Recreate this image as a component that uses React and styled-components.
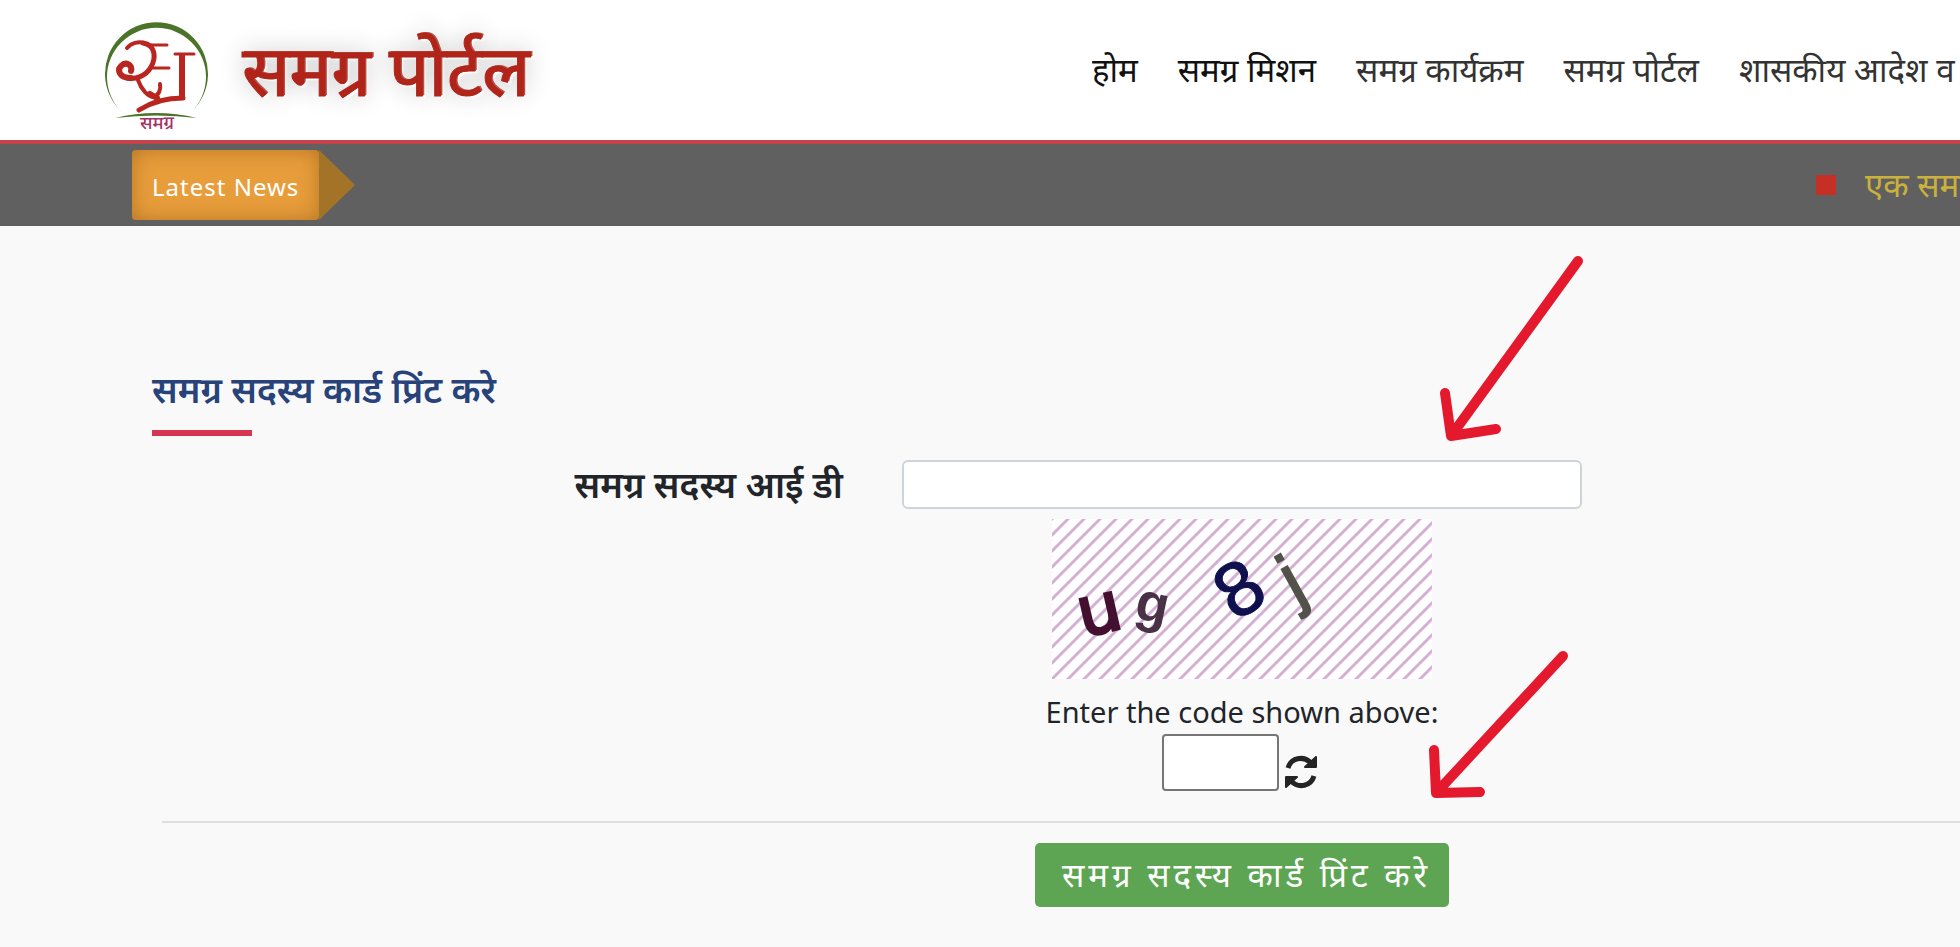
import React, { useState } from 'react';
import styled, { createGlobalStyle } from 'styled-components';

const GlobalStyle = createGlobalStyle`
  * {
    box-sizing: border-box;
  }

  body {
    margin: 0;
    background: #f9f9f9;
    color: #212529;
    font-family: 'Noto Sans', sans-serif;
    overflow-x: hidden;
  }
`;

const Header = styled.header`
  display: grid;
  grid-template-columns: minmax(0, 992px) minmax(0, 1fr);
  align-items: center;
  height: 144px;
  padding-left: 100px;
  background: #ffffff;
  border-bottom: 4px solid #c4434a;
`;

const Brand = styled.a`
  display: flex;
  align-items: flex-end;
  gap: 30px;
  height: 128px;
  color: #b0241a;
  text-decoration: none;
`;

const BrandName = styled.span`
  font-size: 70px;
  font-weight: 400;
  line-height: 130px;
  white-space: nowrap;
  -webkit-text-stroke: 1px #b0241a;
  text-shadow: 1px 0 0 #b5443b, 2px -1px 0 #b8544c, 3px 2px 2px #ffffff, 0 0 24px rgba(0, 0, 0, 0.3);
`;

const Nav = styled.nav`
  display: flex;
  gap: 40px;
  overflow: hidden;
`;

const NavLink = styled.a`
  flex: none;
  color: ${(props) => (props.$dark ? '#111111' : '#333333')};
  font-size: 33px;
  line-height: 60px;
  text-decoration: none;
  white-space: nowrap;
`;

const NewsBar = styled.section`
  display: flex;
  align-items: center;
  justify-content: space-between;
  height: 82px;
  padding-left: 132px;
  background: #606060;
  overflow: hidden;
`;

const NewsLabel = styled.div`
  display: flex;
  align-items: center;

  &::after {
    content: '';
    border: 35px solid transparent;
    border-left: 36px solid #a37428;
    border-right: 0;
  }
`;

const NewsText = styled.span`
  height: 70px;
  padding: 0 20px;
  border-radius: 4px;
  background: #e89d3b;
  box-shadow: inset 0 0 20px rgba(120, 70, 10, 0.45);
  color: #ffffff;
  font-size: 24px;
  letter-spacing: 1px;
  line-height: 74px;
`;

const Ticker = styled.div`
  display: flex;
  align-items: center;
  gap: 29px;
  flex: 0 0 144px;
  overflow: hidden;
  color: #cbb13c;
  font-size: 33px;
  line-height: 60px;
  white-space: nowrap;
`;

const Bullet = styled.span`
  flex: none;
  width: 20px;
  height: 20px;
  background: #c52f24;
`;

const Main = styled.main`
  padding: 134px 0 40px 152px;
`;

const Title = styled.h1`
  margin: 0 0 24px;
  color: #28427a;
  font-size: 36px;
  font-weight: 600;
  line-height: 60px;

  &::after {
    content: '';
    display: block;
    width: 100px;
    height: 6px;
    margin-top: 10px;
    background: #d63651;
  }
`;

const Form = styled.form`
  position: relative;
`;

const Row = styled.div`
  display: grid;
  grid-template-columns: minmax(0, 691px) minmax(0, 680px);
  column-gap: 59px;
  align-items: center;
`;

const FieldLabel = styled.label`
  font-size: 36px;
  font-weight: 600;
  line-height: 48px;
  text-align: right;
`;

const TextField = styled.input`
  width: 100%;
  height: 49px;
  padding: 4px 12px;
  border: 2px solid #ced4da;
  border-radius: 6px;
  background: #ffffff;
  font: inherit;
  font-size: 28px;
`;

const Centered = styled.div`
  grid-column: 2;
  display: flex;
  flex-direction: column;
  align-items: center;
`;

const CaptchaImage = styled.svg`
  display: block;
  margin-top: 10px;
`;

const CodeLabel = styled.label`
  margin-top: 10px;
  font-size: 29px;
  line-height: 45px;
  white-space: nowrap;
`;

const CodeLine = styled.div`
  display: flex;
  align-items: flex-end;
`;

const CodeField = styled.input`
  width: 117px;
  height: 57px;
  padding: 4px 8px;
  border: 2px solid #767676;
  border-radius: 4px;
  background: #ffffff;
  font: inherit;
  font-size: 28px;
`;

const RefreshButton = styled.button`
  display: flex;
  padding: 2px 6px;
  border: 0;
  background: transparent;
  cursor: pointer;
`;

const Divider = styled.hr`
  margin: 30px 0 20px 10px;
  border: 0;
  border-top: 2px solid #dedede;
`;

const SubmitButton = styled.button`
  height: 64px;
  padding: 0 18px 0 27px;
  border: 0;
  border-radius: 5px;
  background: #5da552;
  color: #ffffff;
  font: inherit;
  font-size: 33px;
  letter-spacing: 4px;
  line-height: 64px;
  white-space: nowrap;
  cursor: pointer;
`;

const Arrow = styled.svg`
  position: absolute;
  top: ${(props) => props.$top}px;
  left: ${(props) => props.$left}px;
  pointer-events: none;
  fill: none;
  stroke: #e5192d;
  stroke-width: 10;
  stroke-linecap: round;
  stroke-linejoin: round;
`;

const Logo = () => (
  <svg width="112" height="116" viewBox="0 0 112 116" aria-hidden="true">
    <path d="M22 94A51.5 51.5 0 1 1 91 94A49.5 49 0 1 0 22 94Z" fill="#4c7429" />
    <path d="M15 100Q56 90 97 100Q56 95 15 100Z" fill="#4c7429" />
    <g fill="none" stroke="#b8261f" strokeLinecap="round" strokeLinejoin="round">
      <path d="M27 30C31 25 39 23 44 25" strokeWidth="4" />
      <path d="M43 25C56 27 56 40 51 49C46 58 35 62 27 60" strokeWidth="5" />
      <path d="M31 60C19 60 17 52 21 48C26 43 33 47 31 53" strokeWidth="6" />
      <path d="M38 62C41 71 48 79 54 79C59 77 61 71 60 66" strokeWidth="4" />
      <path d="M50 76L57 80" strokeWidth="6" />
      <path d="M49 27H67M53 50H69" strokeWidth="3" />
      <path d="M75 36H94" strokeWidth="3" />
      <path d="M82 37V82" strokeWidth="6" strokeLinecap="butt" />
      <path d="M39 92C50 85 65 80 83 80" strokeWidth="5" />
    </g>
    <text x="57" y="111" fill="#a13262" fontFamily="'Noto Sans', sans-serif" fontSize="18" fontWeight="500" textAnchor="middle">
      समग्र
    </text>
  </svg>
);

const Captcha = () => (
  <CaptchaImage width="380" height="160" viewBox="0 0 380 160" role="img" aria-label="ug8j">
    <defs>
      <pattern id="hatch" width="16" height="16" patternUnits="userSpaceOnUse">
        <rect width="16" height="16" fill="#ffffff" />
        <path d="M-4 4L4 -4M-4 20L20 -4M12 20L20 12" stroke="#d4b0d4" strokeWidth="3" />
      </pattern>
    </defs>
    <rect width="380" height="160" fill="url(#hatch)" />
    <text transform="translate(31 118) rotate(-13)" fill="#431030" fontFamily="'DejaVu Sans', sans-serif" fontSize="68" stroke="#431030" strokeWidth="3">
      u
    </text>
    <text transform="translate(81 99) rotate(12)" fill="#493247" fontFamily="'Liberation Sans', sans-serif" fontSize="54" fontWeight="700">
      g
    </text>
    <text transform="translate(182 104) rotate(-33)" fill="#10104f" fontFamily="'DejaVu Sans', sans-serif" fontSize="72" stroke="#10104f" strokeWidth="1">
      8
    </text>
    <text transform="translate(244 86) rotate(-29)" fill="#53524a" fontFamily="'Liberation Sans', sans-serif" fontSize="72" stroke="#53524a" strokeWidth="2">
      j
    </text>
  </CaptchaImage>
);

const RefreshIcon = () => (
  <svg width="32" height="34" viewBox="0 0 32 34" aria-hidden="true">
    <g fill="none" stroke="#242424" strokeWidth="5">
      <path d="M3 13C6 3 18 0 26 8" />
      <path d="M29 21C26 31 14 34 6 26" />
    </g>
    <path d="M31 2V12H20Z M1 32V22H12Z" fill="#242424" stroke="#242424" strokeWidth="2" strokeLinejoin="round" />
  </svg>
);

const links = ['होम', 'समग्र मिशन', 'समग्र कार्यक्रम', 'समग्र पोर्टल', 'शासकीय आदेश व नियम'];

const App = () => {
  const [memberId, setMemberId] = useState('');
  const [code, setCode] = useState('');

  const handleSubmit = (e) => {
    e.preventDefault();
  };

  return (
    <>
      <GlobalStyle />
      <Header>
        <Brand href="#">
          <Logo />
          <BrandName>समग्र पोर्टल</BrandName>
        </Brand>
        <Nav>
          {links.map((link, idx) => (
            <NavLink href="#" key={link} $dark={idx < 2}>
              {link}
            </NavLink>
          ))}
        </Nav>
      </Header>
      <NewsBar>
        <NewsLabel>
          <NewsText>Latest News</NewsText>
        </NewsLabel>
        <Ticker>
          <Bullet />
          <span>एक समग्र</span>
        </Ticker>
      </NewsBar>
      <Main>
        <Title>समग्र सदस्य कार्ड प्रिंट करे</Title>
        <Form onSubmit={handleSubmit}>
          <Row>
            <FieldLabel htmlFor="member-id">समग्र सदस्य आई डी</FieldLabel>
            <TextField id="member-id" value={memberId} onChange={(e) => setMemberId(e.target.value)} />
            <Centered>
              <Captcha />
              <CodeLabel htmlFor="code">Enter the code shown above:</CodeLabel>
              <CodeLine>
                <CodeField id="code" value={code} onChange={(e) => setCode(e.target.value)} />
                <RefreshButton type="button" aria-label="Refresh">
                  <RefreshIcon />
                </RefreshButton>
              </CodeLine>
            </Centered>
          </Row>
          <Divider />
          <Row>
            <Centered>
              <SubmitButton type="submit">समग्र सदस्य कार्ड प्रिंट करे</SubmitButton>
            </Centered>
          </Row>
          <Arrow $top={-210} $left={1280} width="160" height="200" viewBox="0 0 160 200">
            <path d="M146 11L19 186M13 143L19 186L64 179" />
          </Arrow>
          <Arrow $top={180} $left={1270} width="160" height="170" viewBox="0 0 160 170">
            <path d="M141 16L14 153M12 110L14 153L58 152" />
          </Arrow>
        </Form>
      </Main>
    </>
  );
};

export default App;
